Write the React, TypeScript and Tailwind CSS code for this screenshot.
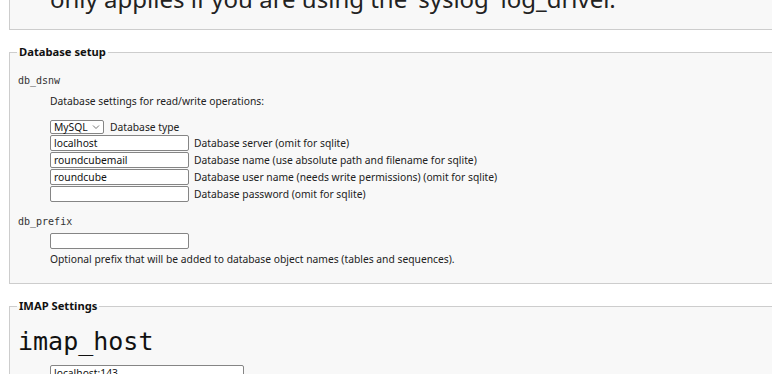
import React from 'react';

const sans = { fontFamily: '"Noto Sans", "Open Sans", sans-serif' };
const mono = { fontFamily: '"DejaVu Sans Mono", monospace' };

function Field({ value, width = 'w-[139px]' }: { value?: string; width?: string }) {
    return (
        <input
            readOnly
            defaultValue={value ?? ''}
            className={`${width} h-[16px] px-[3px] border border-[#858585] rounded-[2px] bg-white text-[10.3px] leading-[14px] text-[#111] outline-none`}
            style={sans}
        />
    );
}

function Row({ value, label }: { value?: string; label: string }) {
    return (
        <div className="flex items-center gap-[5px]">
            <Field value={value} />
            <span className="text-[10.3px] leading-[16px]">{label}</span>
        </div>
    );
}

export default function App() {
    return (
        <div className="w-[772px] h-[374px] overflow-hidden bg-white text-[#222]" style={sans}>
            {/* tail of the logging section, scrolled off the top */}
            <div className="ml-[9px] w-[800px] h-[30px] border-l border-r border-b border-[#cdcdcd] bg-[#f8f8f8] overflow-hidden">
                <p className="mt-[-13px] pl-[40px] text-[24px] leading-[24px] whitespace-nowrap text-[#222]">
                    only applies if you are using the 'syslog' log_driver.
                </p>
            </div>

            <fieldset className="mt-[14px] ml-[9px] w-[800px] border border-[#cdcdcd] bg-[#f8f8f8] pl-[8px] pb-[16px]">
                <legend className="ml-[-1px] px-[2px] text-[11.2px] leading-[16px] font-bold text-[#111]">Database setup</legend>

                <div className="mt-[14px] text-[10px] leading-[14px] text-[#333]" style={mono}>
                    db_dsnw
                </div>
                <div className="ml-[32px]">
                    <p className="mt-[5px] text-[10.3px] leading-[16px]">Database settings for read/write operations:</p>
                    <div className="mt-[11px] flex items-center gap-[6px]">
                        <div className="flex items-center justify-between w-[54px] h-[14px] pl-[3px] pr-[3px] border border-[#858585] rounded-[2px] bg-white text-[10.3px] leading-[12px] text-[#111]">
                            <span>MySQL</span>
                            <svg width="8" height="6" viewBox="0 0 8 6" fill="none">
                                <path d="M1 1.5 L4 4.5 L7 1.5" stroke="#666" strokeWidth="0.9" />
                            </svg>
                        </div>
                        <span className="text-[10.3px] leading-[14px]">Database type</span>
                    </div>
                    <div className="mt-[1px] flex flex-col gap-[1px]">
                        <Row value="localhost" label="Database server (omit for sqlite)" />
                        <Row value="roundcubemail" label="Database name (use absolute path and filename for sqlite)" />
                        <Row value="roundcube" label="Database user name (needs write permissions) (omit for sqlite)" />
                        <Row label="Database password (omit for sqlite)" />
                    </div>
                </div>

                <div className="mt-[13px] text-[10px] leading-[14px] text-[#333]" style={mono}>
                    db_prefix
                </div>
                <div className="ml-[32px]">
                    <div className="mt-[4px] flex">
                        <Field />
                    </div>
                    <p className="mt-[2px] text-[10.3px] leading-[16px]">
                        Optional prefix that will be added to database object names (tables and sequences).
                    </p>
                </div>
            </fieldset>

            <fieldset className="mt-[14px] ml-[9px] w-[800px] border border-[#cdcdcd] bg-[#f8f8f8] pl-[8px] pb-[16px]">
                <legend className="ml-[-1px] px-[2px] text-[11.2px] leading-[16px] font-bold text-[#111]">IMAP Settings</legend>
                <div className="mt-[13px] text-[25px] leading-[30px] text-[#111]" style={mono}>
                    imap_host
                </div>
                <div className="ml-[32px] mt-[8px] flex">
                    <Field value="localhost:143" width="w-[194px]" />
                </div>
            </fieldset>
        </div>
    );
}
